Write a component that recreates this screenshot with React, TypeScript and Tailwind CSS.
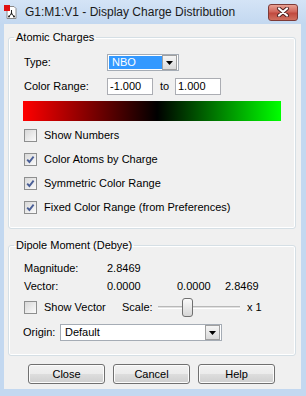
import React from "react";

const font = "font-['Liberation_Sans',Arial,sans-serif]";

function Check({ checked, label }: { checked?: boolean; label: string }) {
  return (
    <div className="flex items-center gap-[7px]">
      <div className="w-[13px] h-[13px] border border-[#8e8f8f] bg-gradient-to-br from-[#d8d8d8] to-[#fbfbfb] flex items-center justify-center">
        {checked && (
          <svg width="11" height="11" viewBox="0 0 11 11">
            <path d="M2.2 5.6 L4.4 8 L8.6 2.6" fill="none" stroke="#4a5f97" strokeWidth="1.9" />
          </svg>
        )}
      </div>
      <span>{label}</span>
    </div>
  );
}

function Arrow() {
  return (
    <div className="w-[15px] h-[15px] border border-[#a0a0a0] bg-gradient-to-b from-[#f5f5f5] to-[#dadada] flex items-center justify-center">
      <svg width="7" height="4" viewBox="0 0 7 4">
        <path d="M0 0 H7 L3.5 4 Z" fill="#000" />
      </svg>
    </div>
  );
}

function Button({ label }: { label: string }) {
  return (
    <div className="w-[77px] h-[20px] rounded-[3px] border border-[#707070] bg-[linear-gradient(#f2f2f2,#ebebeb_50%,#dddddd_50%,#cfcfcf)] shadow-[inset_0_0_0_1px_#fcfcfc] flex items-center justify-center">
      {label}
    </div>
  );
}

function Group({ title, children, className }: { title: string; children: React.ReactNode; className?: string }) {
  return (
    <fieldset className={`border border-[#d5dfe5] rounded-[3px] shadow-[inset_0_0_0_1px_#ffffff] ${className ?? ""}`}>
      <legend className="ml-[5px] px-[2px] leading-[14px]">{title}</legend>
      {children}
    </fieldset>
  );
}

export default function App() {
  return (
    <div className={`w-[306px] h-[396px] bg-[#c3d8f0] flex flex-col text-[11px] text-black ${font}`}>
      {/* title bar */}
      <div className="h-[24px] flex items-center justify-between pl-[4px] pr-[8px] bg-gradient-to-b from-[#d4e4f6] to-[#c3d8f0]">
        <div className="flex items-center gap-[8px]">
          <svg width="13" height="14" viewBox="0 0 13 14">
            <path d="M3 1.5 H10 L12 3.5 V13.5 H3 Z" fill="#fff" stroke="#8a8a8a" />
            <rect x="0" y="0" width="6" height="6" fill="#e01010" />
            <path d="M7.5 5 V8.5 M7.5 8.5 L5 11.5 M7.5 8.5 L10 11.5" stroke="#222" strokeWidth="1" fill="none" />
            <circle cx="5" cy="11.5" r="1" fill="#222" />
            <circle cx="10" cy="11.5" r="1" fill="#222" />
            <circle cx="7.5" cy="8.5" r="0.9" fill="#222" />
          </svg>
          <span className="text-[12px] text-[#1a1a1a]">G1:M1:V1 - Display Charge Distribution</span>
        </div>
        <div className="w-[30px] h-[17px] rounded-[3px] border border-[#7d3a37] bg-[linear-gradient(#e8a193,#d0665b_45%,#c14a3f_55%,#d0705f)] flex items-center justify-center">
          <svg width="14" height="10" viewBox="0 0 14 10">
            <path d="M3 1.5 L11 8.5 M11 1.5 L3 8.5" stroke="#4a2020" strokeWidth="4" strokeLinecap="round" />
            <path d="M3 1.5 L11 8.5 M11 1.5 L3 8.5" stroke="#fff" strokeWidth="2.2" strokeLinecap="round" />
          </svg>
        </div>
      </div>

      {/* client area */}
      <div className="flex-1 ml-[4px] mr-[5px] mb-[7px] bg-[#f0f0f0] pl-[4px] pr-[5px] flex flex-col">
        <Group title="Atomic Charges" className="mt-[6px]">
          <div className="pl-[15px] pt-[10px] pb-[9px] flex flex-col">
            <div className="flex items-center h-[17px]">
              <span className="w-[83px]">Type:</span>
              <div className="w-[72px] h-[17px] border border-[#a5acb5] bg-white flex items-center p-[1px]">
                <div className="flex-1 h-full bg-[#3399ff] text-white pl-[3px] leading-[13px]">NBO</div>
                <Arrow />
              </div>
            </div>
            <div className="flex items-center h-[17px] mt-[7px]">
              <span className="w-[83px]">Color Range:</span>
              <div className="w-[46px] h-[17px] border border-[#abadb3] bg-white pl-[2px] leading-[15px]">-1.000</div>
              <span className="w-[22px] pl-[7px]">to</span>
              <div className="w-[46px] h-[17px] border border-[#abadb3] bg-white pl-[2px] leading-[15px]">1.000</div>
            </div>
            <div className="-ml-[1px] mt-[6px] w-[258px] h-[20px] bg-[linear-gradient(to_right,#ff0000,#000000_52%,#00ff00)]" />
            <div className="mt-[2px] flex flex-col">
              <div className="h-[24px] flex items-center"><Check label="Show Numbers" /></div>
              <div className="h-[24px] flex items-center"><Check checked label="Color Atoms by Charge" /></div>
              <div className="h-[24px] flex items-center"><Check checked label="Symmetric Color Range" /></div>
              <div className="h-[24px] flex items-center"><Check checked label="Fixed Color Range (from Preferences)" /></div>
            </div>
          </div>
        </Group>

        <Group title="Dipole Moment (Debye)" className="mt-[9px]">
          <div className="pl-[15px] pt-[9px] pb-[14px] flex flex-col">
            <div className="flex items-center h-[14px]">
              <span className="w-[83px]">Magnitude:</span>
              <span>2.8469</span>
            </div>
            <div className="flex items-center h-[14px] mt-[4px]">
              <span className="w-[83px]">Vector:</span>
              <span className="w-[70px]">0.0000</span>
              <span className="w-[48px]">0.0000</span>
              <span>2.8469</span>
            </div>
            <div className="flex items-center h-[21px] mt-[4px]">
              <div className="w-[98px]"><Check label="Show Vector" /></div>
              <span className="w-[36px]">Scale:</span>
              <div className="relative w-[82px] h-[21px] flex items-center">
                <div className="w-full h-[3px] border-t border-[#b8b8b8] border-b border-b-white bg-[#e0e0e0]" />
                <div className="absolute left-[24px] top-[1px] w-[11px] h-[19px] rounded-[3px] border border-[#707070] bg-gradient-to-b from-[#fbfbfb] to-[#d6d6d6]" />
              </div>
              <span className="ml-[7px]">x 1</span>
            </div>
            <div className="flex items-center h-[17px] mt-[6px] -ml-[1px]">
              <span className="w-[37px]">Origin:</span>
              <div className="w-[162px] h-[17px] border border-[#a5acb5] bg-white flex items-center p-[1px]">
                <div className="flex-1 pl-[3px] leading-[13px]">Default</div>
                <Arrow />
              </div>
            </div>
          </div>
        </Group>

        <div className="mt-[8px] pl-[20px] flex gap-[8px]">
          <Button label="Close" />
          <Button label="Cancel" />
          <Button label="Help" />
        </div>
      </div>
    </div>
  );
}
